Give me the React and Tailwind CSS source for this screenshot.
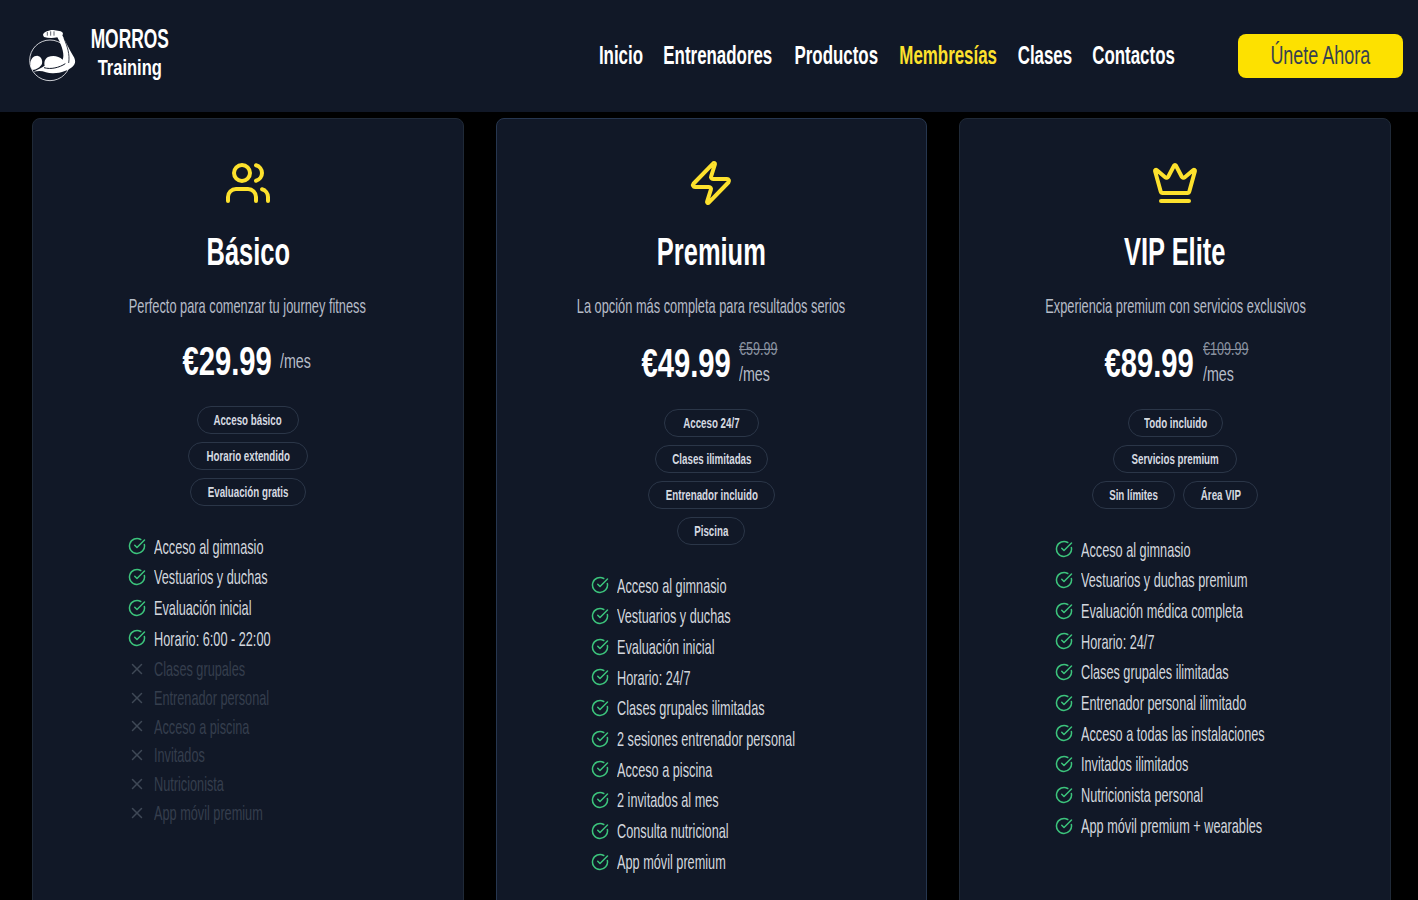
import React from "react";
import { Users, Zap, Crown, CircleCheckBig, X } from "lucide-react";

const F = "font-['Liberation_Sans_Narrow','Liberation_Sans',sans-serif]";

function S({ children, className = "", sx = "scale-x-[0.8]", w }) {
  return (
    <span className={`flex justify-center shrink-0 ${w || ""}`}>
      <span className={`block shrink-0 whitespace-nowrap ${sx} ${className}`}>{children}</span>
    </span>
  );
}

function Logo() {
  return (
    <svg width="60" height="70" viewBox="0 0 180 210" className="shrink-0">
      <circle cx="90" cy="118" r="61" fill="none" stroke="#e5e7eb" strokeWidth="2.6" />
      <path d="M69 42 C70 34 84 27 100 27 L118 30 C129 32 131 38 127 43 C137 62 147 84 158 102 C166 114 168 124 162 132 C150 148 122 156 100 157 C86 158 72 150 58 150 C52 150 46 152 40 152 C52 146 66 140 74 134 C72 124 74 114 84 108 C98 102 116 104 128 116 C134 104 128 78 112 49 C100 52 84 52 72 48 Z" fill="#ffffff" />
      <path d="M31 128 C31 114 40 104 52 104 C64 106 68 118 66 128 C62 138 48 146 38 147 C33 142 31 136 31 128 Z" fill="#ffffff" />
      <path d="M132 52 C142 76 150 100 146 126" fill="none" stroke="#111827" strokeWidth="2.5" />
      <path d="M72 140 C92 146 118 140 136 128" fill="none" stroke="#111827" strokeWidth="3" />
      <path d="M82 33 L82 44 M92 31 L92 44 M102 31 L102 44" fill="none" stroke="#111827" strokeWidth="2" />
    </svg>
  );
}

const plans = [
  {
    name: "Básico", Icon: Users, desc: "Perfecto para comenzar tu journey fitness", price: "€29.99",
    tags: [["Acceso básico", "w-[102px]"], ["Horario extendido", "w-[120px]"], ["Evaluación gratis", "w-[116px]"]],
    yes: ["Acceso al gimnasio", "Vestuarios y duchas", "Evaluación inicial", "Horario: 6:00 - 22:00"],
    no: ["Clases grupales", "Entrenador personal", "Acceso a piscina", "Invitados", "Nutricionista", "App móvil premium"],
    listX: "pl-[95px]",
  },
  {
    name: "Premium", Icon: Zap, desc: "La opción más completa para resultados serios", price: "€49.99", old: "€59.99",
    tags: [["Acceso 24/7", "w-[95px]"], ["Clases ilimitadas", "w-[113px]"], ["Entrenador incluido", "w-[127px]"], ["Piscina", "w-[68px]"]],
    yes: ["Acceso al gimnasio", "Vestuarios y duchas", "Evaluación inicial", "Horario: 24/7", "Clases grupales ilimitadas", "2 sesiones entrenador personal", "Acceso a piscina", "2 invitados al mes", "Consulta nutricional", "App móvil premium"],
    no: [],
    listX: "pl-[94px]",
  },
  {
    name: "VIP Elite", Icon: Crown, desc: "Experiencia premium con servicios exclusivos", price: "€89.99", old: "€109.99",
    tags: [["Todo incluido", "w-[95px]"], ["Servicios premium", "w-[124px]"], ["Sin límites", "w-[83px]"], ["Área VIP", "w-[75px]"]],
    yes: ["Acceso al gimnasio", "Vestuarios y duchas premium", "Evaluación médica completa", "Horario: 24/7", "Clases grupales ilimitadas", "Entrenador personal ilimitado", "Acceso a todas las instalaciones", "Invitados ilimitados", "Nutricionista personal", "App móvil premium + wearables"],
    no: [],
    listX: "pl-[95px]",
    inline: true,
  },
];

function Tag({ t, w }) {
  return (
    <div className={`h-[28px] ${w} rounded-full border border-[#2b3648] flex items-center justify-center text-[15px] font-bold text-[#d6dae1]`}>
      <S sx="scale-x-[0.65]">{t}</S>
    </div>
  );
}

function Card({ p, featured }) {
  const { Icon } = p;
  const tagRows = p.inline ? [p.tags.slice(0, 1), p.tags.slice(1, 2), p.tags.slice(2, 4)] : p.tags.map((t) => [t]);
  return (
    <div className={`rounded-lg border ${featured ? "border-[#26364f]" : "border-[#1f2937]"} bg-[#111827] h-[800px] flex flex-col items-stretch pt-[40px]`}>
      <div className="flex justify-center"><Icon size={48} color="#fde12d" strokeWidth={2} /></div>
      <div className="mt-[25px] h-[40px] flex items-center justify-center text-[38px] font-bold text-white"><S sx="scale-x-[0.67]">{p.name}</S></div>
      <div className="mt-[20px] h-[28px] flex items-center justify-center text-[21px] text-[#b6bcc7]"><S sx="scale-x-[0.61]">{p.desc}</S></div>
      <div className={`mt-[18px] flex items-center justify-center gap-[8px] ${p.old ? "h-[49px]" : "h-[46px]"}`}>
        <S sx="scale-x-[0.73]" w="w-[90px] -ml-[1px]" className="text-[40px] font-bold text-white">{p.price}</S>
        {p.old ? (
          <div className="flex flex-col items-start w-[42px] text-[#8b93a1]">
            <S sx="scale-x-[0.7] origin-left" className="text-[18px] leading-[22px] line-through" w="!justify-start">{p.old}</S>
            <S sx="scale-x-[0.68] origin-left" className="text-[21px] leading-[26px] text-[#b6bcc7]" w="!justify-start mt-[1px]">/mes</S>
          </div>
        ) : (
          <S sx="scale-x-[0.68] origin-left" className="text-[21px] text-[#b6bcc7]" w="w-[32px] !justify-start">/mes</S>
        )}
      </div>
      <div className="mt-[22px] flex flex-col items-center gap-[8px]">
        {tagRows.map((r, i) => (
          <div key={i} className="flex gap-[8px]">
            {r.map(([t, w]) => <Tag key={t} t={t} w={w} />)}
          </div>
        ))}
      </div>
      <div className={`mt-[25px] flex flex-col ${p.listX}`}>
        {p.yes.map((f) => (
          <div key={f} className="h-[30.7px] flex items-center gap-[8px] text-[#d3d7de] text-[21px]">
            <CircleCheckBig size={18} color="#3cc47c" strokeWidth={2} className="shrink-0" />
            <span className="block whitespace-nowrap origin-left scale-x-[0.605]">{f}</span>
          </div>
        ))}
        {p.no.map((f, i) => (
          <div key={f} className={`h-[28.7px] flex items-center gap-[8px] text-[#353e4d] text-[21px] ${i === 0 ? "mt-[1px]" : ""}`}>
            <X size={18} color="#3f4856" strokeWidth={2} className="shrink-0" />
            <span className="block whitespace-nowrap origin-left scale-x-[0.605]">{f}</span>
          </div>
        ))}
      </div>
    </div>
  );
}

export default function App() {
  const nav = [["Inicio", "w-[44px]"], ["Entrenadores", "w-[112px]"], ["Productos", "w-[85px]"], ["Membresías", "w-[100px]"], ["Clases", "w-[55px]"], ["Contactos", "w-[83px]"]];
  return (
    <div className={`h-[900px] overflow-hidden bg-black ${F}`}>
      <header className="h-[112px] bg-[#111827] flex items-center pl-[20px] pr-[15px]">
        <Logo />
        <div className="ml-[9px] w-[82px] -mt-[8px] flex flex-col items-center text-white">
          <S sx="scale-x-[0.644]" className="text-[27px] leading-[31px] font-bold">MORROS</S>
          <S sx="scale-x-[0.75]" className="text-[22px] leading-[25px] font-bold">Training</S>
        </div>
        <nav className="ml-auto -mt-[2px] flex items-center gap-[19.5px] text-[26px] font-bold text-white">
          {nav.map(([n, w]) => (
            <S key={n} w={w} sx="scale-x-[0.65]" className={n === "Membresías" ? "text-[#fde12d]" : ""}>{n}</S>
          ))}
        </nav>
        <div className="ml-[63px] w-[165px] h-[44px] rounded-lg bg-[#fde100] flex items-center justify-center text-[26px] text-[#374151]">
          <S sx="scale-x-[0.69]" className="-mt-[2px]">Únete Ahora</S>
        </div>
      </header>
      <main className="pl-[32px] pr-[27px] pt-[6px] grid grid-cols-3 gap-[32px]">
        {plans.map((p, i) => <Card key={p.name} p={p} featured={i === 1} />)}
      </main>
    </div>
  );
}
